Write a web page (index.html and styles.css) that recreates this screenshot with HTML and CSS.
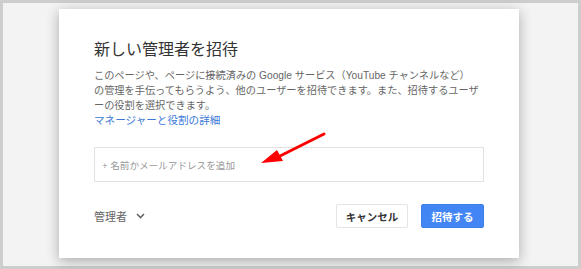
FILE: index.html
```html
<!DOCTYPE html>
<html lang="ja">
<head>
    <meta charset="UTF-8">
    <meta name="viewport" content="width=device-width, initial-scale=1.0">
    <title>新しい管理者を招待</title>
    <link rel="stylesheet" href="styles.css">
</head>
<body>
    <div class="frame">
        <div class="dialog">
            <h1>新しい管理者を招待</h1>
            <p class="desc">
                このページや、ページに接続済みの Google サービス（YouTube チャンネルなど）<br>
                の管理を手伝ってもらうよう、他のユーザーを招待できます。また、招待するユーザ<br>
                ーの役割を選択できます。<br>
                <a href="#" class="link">マネージャーと役割の詳細</a>
            </p>

            <div class="invite-input">+ 名前かメールアドレスを追加</div>

            <div class="actions">
                <div class="role">
                    <span>管理者</span>
                    <svg class="chevron" width="9" height="6" viewBox="0 0 9 6">
                        <path d="M1 1 L4.5 4.5 L8 1" fill="none" stroke="#666" stroke-width="1.6"/>
                    </svg>
                </div>
                <div class="buttons">
                    <button class="btn btn-cancel">キャンセル</button>
                    <button class="btn btn-invite">招待する</button>
                </div>
            </div>

            <!-- 注釈の矢印 -->
            <svg class="arrow" width="80" height="45" viewBox="0 0 80 45">
                <line x1="69" y1="9" x2="25" y2="31" stroke="#f00" stroke-width="3" stroke-linecap="round"/>
                <polygon points="6,38 22,25 28,36" fill="#f00"/>
            </svg>
        </div>
    </div>
</body>
</html>
```
FILE: styles.css
```css
* {
    margin: 0;
    padding: 0;
    box-sizing: border-box;
}

body {
    font-family: "Liberation Sans", "Noto Sans CJK JP", sans-serif;
    background: #fff;
}

.frame {
    width: 581px;
    height: 269px;
    border: 3px solid #cdcdcd;
    background: #f3f3f3;
    padding: 6px 0 0 56px;
}

.dialog {
    position: relative;
    width: 460px;
    height: 249px;
    background: #fff;
    padding: 30px 35px 0 35px;
    box-shadow: 0 3px 12px rgba(0, 0, 0, 0.3);
}

h1 {
    font-size: 16px;
    font-weight: 400;
    line-height: 22px;
    color: #333;
    margin-bottom: 7px;
}

.desc {
    font-size: 10.2px;
    line-height: 15px;
    color: #666;
    white-space: nowrap;
}

.link {
    color: #3c78d8;
    text-decoration: none;
    font-size: 10.6px;
}

.invite-input {
    margin-top: 19px;
    height: 35px;
    border: 1px solid #e2e2e2;
    padding-left: 7px;
    display: flex;
    align-items: center;
    font-size: 9.6px;
    color: #999;
}

.actions {
    margin-top: 22px;
    display: flex;
    justify-content: space-between;
    align-items: center;
}

.role {
    display: flex;
    align-items: center;
    gap: 9px;
    font-size: 11px;
    color: #666;
}

.buttons {
    display: flex;
    gap: 13px;
}

.btn {
    height: 24px;
    font-family: inherit;
    font-size: 10.5px;
    font-weight: bold;
    border-radius: 2px;
    cursor: pointer;
}

.btn-cancel {
    width: 72px;
    background: #fff;
    border: 1px solid #e3e3e3;
    color: #333;
}

.btn-invite {
    width: 63px;
    background: #4285f4;
    border: 1px solid #3f7fe8;
    color: #fff;
}

.arrow {
    position: absolute;
    left: 196px;
    top: 116px;
}
```
